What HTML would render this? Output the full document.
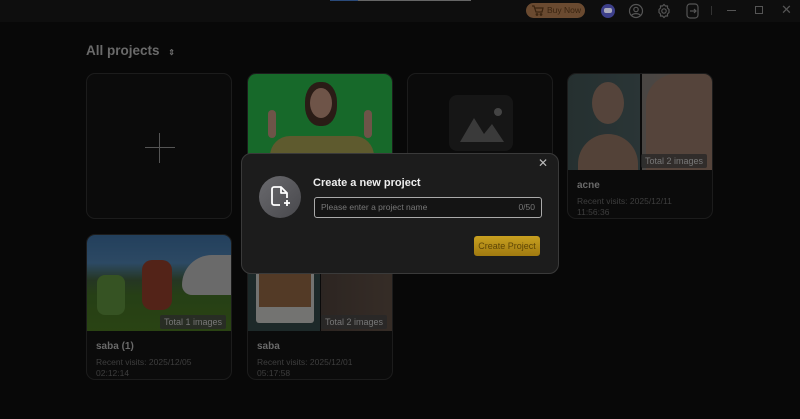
<!DOCTYPE html>
<html><head><meta charset="utf-8"><style>
*{margin:0;padding:0;box-sizing:border-box}
body{width:800px;height:419px;background:#080808;font-family:"Liberation Sans",sans-serif;position:relative;overflow:hidden;color:#777}
.top{position:absolute;left:0;top:0;width:800px;height:22px;background:#0e0e0e}
.card{position:absolute;width:146px;height:146px;border:1px solid #1c1c1c;border-radius:9px;background:#0b0b0b;overflow:hidden}
.img{position:absolute;left:0;top:0;width:146px;height:96px}
.dim{filter:brightness(.6)}
.tag{position:absolute;right:5px;top:80px;background:rgba(40,40,40,.8);color:#777;font-size:9px;padding:2px 4px;border-radius:2px}
.t{position:absolute;left:9px;top:106px;font-size:10px;font-weight:bold;color:#6a6a6a}
.d{position:absolute;left:9px;top:122px;font-size:8.5px;color:#3e3e3e;line-height:11px}
.modal{position:absolute;left:241px;top:153px;width:318px;height:121px;background:#1c1c1c;border:1px solid #3a3a3a;border-radius:10px}
</style></head><body>
<div class="top"></div>
<div style="position:absolute;left:330px;top:0;width:28px;height:1px;background:#2a4a7a"></div>
<div style="position:absolute;left:358px;top:0;width:113px;height:1px;background:#666"></div>
<div style="position:absolute;left:526px;top:3px;width:59px;height:15px;border-radius:8px;background:#6a4a30;color:#3a2410;font-size:8.5px;line-height:15px;padding-left:21px">Buy Now</div>
<svg style="position:absolute;left:532px;top:5px" width="12" height="11" viewBox="0 0 12 11" fill="none" stroke="#3a2410" stroke-width="1.2"><path d="M0 1h2l2 6h6l1-4H3"/><circle cx="5" cy="9.5" r=".8"/><circle cx="9" cy="9.5" r=".8"/></svg>
<div style="position:absolute;left:601px;top:4px;width:14px;height:14px;border-radius:50%;background:#3d3f8a"></div>
<div style="position:absolute;left:604px;top:8px;width:8px;height:5px;border-radius:2px;background:#aab"></div>
<svg style="position:absolute;left:628px;top:3px" width="16" height="16" viewBox="0 0 16 16" fill="none" stroke="#555" stroke-width="1.2"><circle cx="8" cy="8" r="6.5"/><circle cx="8" cy="6.5" r="2.2"/><path d="M3.5 12.5c2-2.5 7-2.5 9 0"/></svg>
<svg style="position:absolute;left:656px;top:3px" width="16" height="16" viewBox="0 0 16 16" fill="none" stroke="#555" stroke-width="1.2"><circle cx="8" cy="8" r="2.2"/><path d="M8 1.5l1.5 1.5h2v2l1.5 1.5v3l-1.5 1.5v2h-2L8 14.5 6.5 13h-2v-2L3 9.5v-3L4.5 5V3h2z"/></svg>
<svg style="position:absolute;left:686px;top:3px" width="14" height="16" viewBox="0 0 14 16" fill="none" stroke="#555" stroke-width="1.2"><rect x="1" y="1" width="11" height="14" rx="3"/><path d="M4 8h6M8 6l2 2-2 2"/></svg>
<div style="position:absolute;left:711px;top:6px;width:1px;height:9px;background:#333"></div>
<div style="position:absolute;left:727px;top:10px;width:9px;height:1px;background:#555"></div>
<div style="position:absolute;left:755px;top:6px;width:8px;height:8px;border:1px solid #555"></div>
<div style="position:absolute;left:781px;top:2px;font-size:13px;color:#555">✕</div>

<div style="position:absolute;left:86px;top:43px;font-size:13.5px;font-weight:bold;color:#6a6a6a">All projects <span style="font-size:8px;margin-left:5px">⇕</span></div>

<div class="card" style="left:86px;top:73px">
<div style="position:absolute;left:58px;top:73px;width:30px;height:1px;background:#555"></div>
<div style="position:absolute;left:72px;top:59px;width:1px;height:30px;background:#555"></div></div>
<div class="card" style="left:247px;top:73px"><div class="img" style="background:#17692a"></div>
<div style="position:absolute;left:22px;top:62px;width:104px;height:40px;background:#5e5a2e;border-radius:20px 20px 0 0"></div>
<div style="position:absolute;left:57px;top:8px;width:32px;height:44px;background:#2a1c16;border-radius:45%"></div>
<div style="position:absolute;left:62px;top:14px;width:22px;height:30px;background:#6e5448;border-radius:50%"></div>
<div style="position:absolute;left:20px;top:36px;width:8px;height:28px;background:#6e5448;border-radius:4px"></div>
<div style="position:absolute;left:116px;top:36px;width:8px;height:28px;background:#6e5448;border-radius:4px"></div></div>
<div class="card" style="left:407px;top:73px"><div style="position:absolute;left:41px;top:21px;width:64px;height:56px;border-radius:8px;background:#161616"></div>
<svg style="position:absolute;left:48px;top:30px" width="52" height="40"><circle cx="42" cy="8" r="4" fill="#444"/><path d="M4 38L18 14 28 30 36 20 48 38z" fill="#3a3a3a"/></svg></div>
<div class="card" style="left:567px;top:73px"><div class="dim" style="position:absolute;left:0;top:0;width:146px;height:96px"><div class="img" style="background:linear-gradient(90deg,#3e5050 0,#46585a 72px,#111 72px,#111 74px,#7a7470 74px,#8a7668 146px)"></div>
<div style="position:absolute;left:24px;top:8px;width:32px;height:42px;border-radius:50%;background:#8d7262"></div>
<div style="position:absolute;left:10px;top:60px;width:60px;height:36px;border-radius:30px 30px 0 0;background:#8a6e5e"></div>
<div style="position:absolute;left:78px;top:0;width:68px;height:96px;background:#8e7262;border-radius:30px 0 0 0"></div></div>
<div class="tag">Total 2 images</div><div class="t">acne</div><div class="d">Recent visits: 2025/12/11<br>11:56:36</div></div>

<div class="card" style="left:86px;top:234px"><div class="dim" style="position:absolute;left:0;top:0;width:146px;height:96px"><div class="img" style="background:linear-gradient(#3a6a9a 0,#4a7aa6 28px,#3e5a3a 45px,#3f6a24 60px,#467020 96px)"></div>
<div style="position:absolute;left:95px;top:20px;width:50px;height:40px;border-radius:30px 0 0 10px;background:#b0b0b0"></div>
<div style="position:absolute;left:55px;top:25px;width:30px;height:50px;background:#8a3a28;border-radius:10px"></div>
<div style="position:absolute;left:10px;top:40px;width:28px;height:40px;background:#5a8a3a;border-radius:8px"></div></div>
<div class="tag">Total 1 images</div><div class="t">saba (1)</div><div class="d">Recent visits: 2025/12/05<br>02:12:14</div></div>
<div class="card" style="left:247px;top:234px"><div class="dim" style="position:absolute;left:0;top:0;width:146px;height:96px"><div class="img" style="background:linear-gradient(90deg,#304444 0,#304444 72px,#111 72px,#111 73px,#4a3e38 73px,#5a4a40 146px)"></div>
<div style="position:absolute;left:8px;top:0;width:58px;height:88px;background:#c0c0bc;border-radius:0 0 3px 3px"></div>
<div style="position:absolute;left:11px;top:0;width:52px;height:72px;background:#8a6040"></div></div>
<div class="tag">Total 2 images</div><div class="t">saba</div><div class="d">Recent visits: 2025/12/01<br>05:17:58</div></div>

<div class="modal">
<div style="position:absolute;right:10px;top:2px;font-size:12px;color:#bbb">✕</div>
<div style="position:absolute;left:17px;top:22px;width:42px;height:42px;border-radius:50%;background:linear-gradient(135deg,#6a6a6e,#48484c)"></div>
<svg style="position:absolute;left:27px;top:31px" width="24" height="24" viewBox="0 0 24 24" fill="none" stroke="#fff" stroke-width="1.8" stroke-linejoin="round"><path d="M11 20H5a2 2 0 0 1-2-2V4a2 2 0 0 1 2-2h7l6 6v5"/><path d="M12 2v6h6"/><path d="M18 15v6M15 18h6"/></svg>
<div style="position:absolute;left:71px;top:23px;font-size:11px;font-weight:bold;color:#eee">Create a new project</div>
<div style="position:absolute;left:72px;top:43px;width:228px;height:21px;border:1px solid #aaa;border-radius:3px;background:#141414;font-size:8.5px;color:#777;line-height:19px;padding:0 6px">Please enter a project name<span style="float:right">0/50</span></div>
<div style="position:absolute;left:232px;top:82px;width:66px;height:20px;border-radius:3px;background:linear-gradient(#c8a020,#a07a10);color:#5e4606;font-size:9px;line-height:20px;text-align:center">Create Project</div>
</div>
</body></html>
